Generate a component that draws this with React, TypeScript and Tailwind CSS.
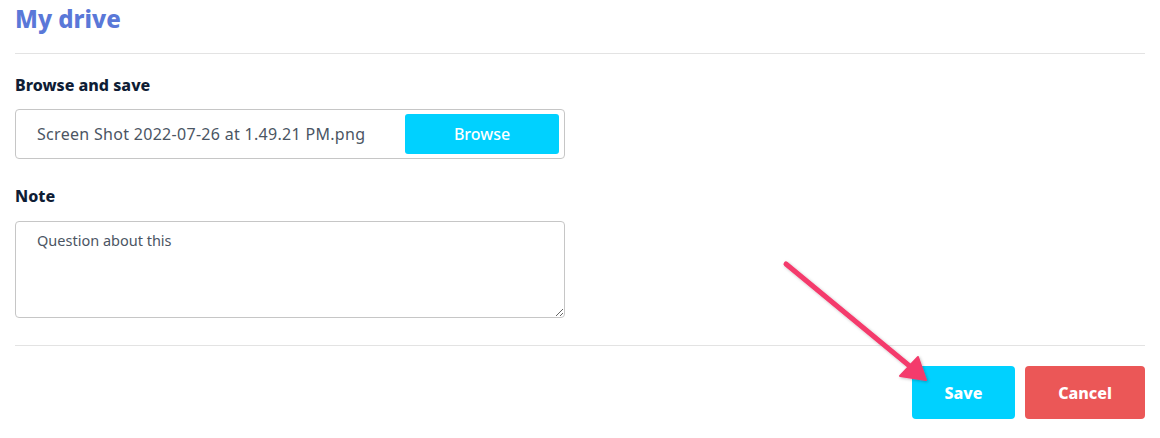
export default function App() {
  return (
    <div className="relative h-[438px] w-[1160px] overflow-hidden bg-white font-['Noto_Sans',sans-serif]">
      <div className="px-[15px]">
        <h1 className="pt-[2px] text-[24px] font-extrabold leading-[34px] text-[#5a78d8]">My drive</h1>
        <div className="mt-[17px] border-t border-[#e3e3e3]" />

        <div className="mt-[20px] text-[16px] font-extrabold leading-[22px] text-[#0f1d35]">Browse and save</div>
        <div className="mt-[13px] flex h-[50px] w-[550px] items-center justify-between rounded-[4px] border border-[#c6c6c6] pl-[21px] pr-[5px]">
          <span className="text-[16px] tracking-[0.3px] text-[#4b5563]">Screen Shot 2022-07-26 at 1.49.21 PM.png</span>
          <button className="h-[40px] w-[154px] rounded-[3px] bg-[#00d1ff] text-[16px] font-medium text-white">Browse</button>
        </div>

        <div className="mt-[26px] text-[16px] font-extrabold leading-[22px] text-[#0f1d35]">Note</div>
        <textarea
          className="mt-[14px] block h-[97px] w-[550px] resize-y rounded-[4px] border border-[#c6c6c6] px-[21px] py-[8px] text-[14.5px] text-[#4b5563] outline-none"
          defaultValue="Question about this"
        />

        <div className="mt-[27px] border-t border-[#e3e3e3]" />
        <div className="mt-[20px] flex justify-end gap-[10px]">
          <button className="h-[53px] w-[103px] rounded-[4px] bg-[#00d1ff] text-[16px] font-extrabold text-white">Save</button>
          <button className="h-[53px] w-[120px] rounded-[4px] bg-[#eb5757] text-[16px] font-extrabold text-white">Cancel</button>
        </div>
      </div>

      <svg className="pointer-events-none absolute left-0 top-0" width="1160" height="438">
        <defs>
          <filter id="sh" x="-20%" y="-20%" width="140%" height="140%">
            <feDropShadow dx="1" dy="1" stdDeviation="1.5" floodColor="#000" floodOpacity="0.25" />
          </filter>
        </defs>
        <g filter="url(#sh)" fill="#f43b6c" stroke="#f43b6c" strokeLinecap="round" strokeLinejoin="round">
          <line x1="786" y1="264" x2="912" y2="368" strokeWidth="5" />
          <polygon points="926,380 900,376 918,357" strokeWidth="2" />
        </g>
      </svg>
    </div>
  )
}
